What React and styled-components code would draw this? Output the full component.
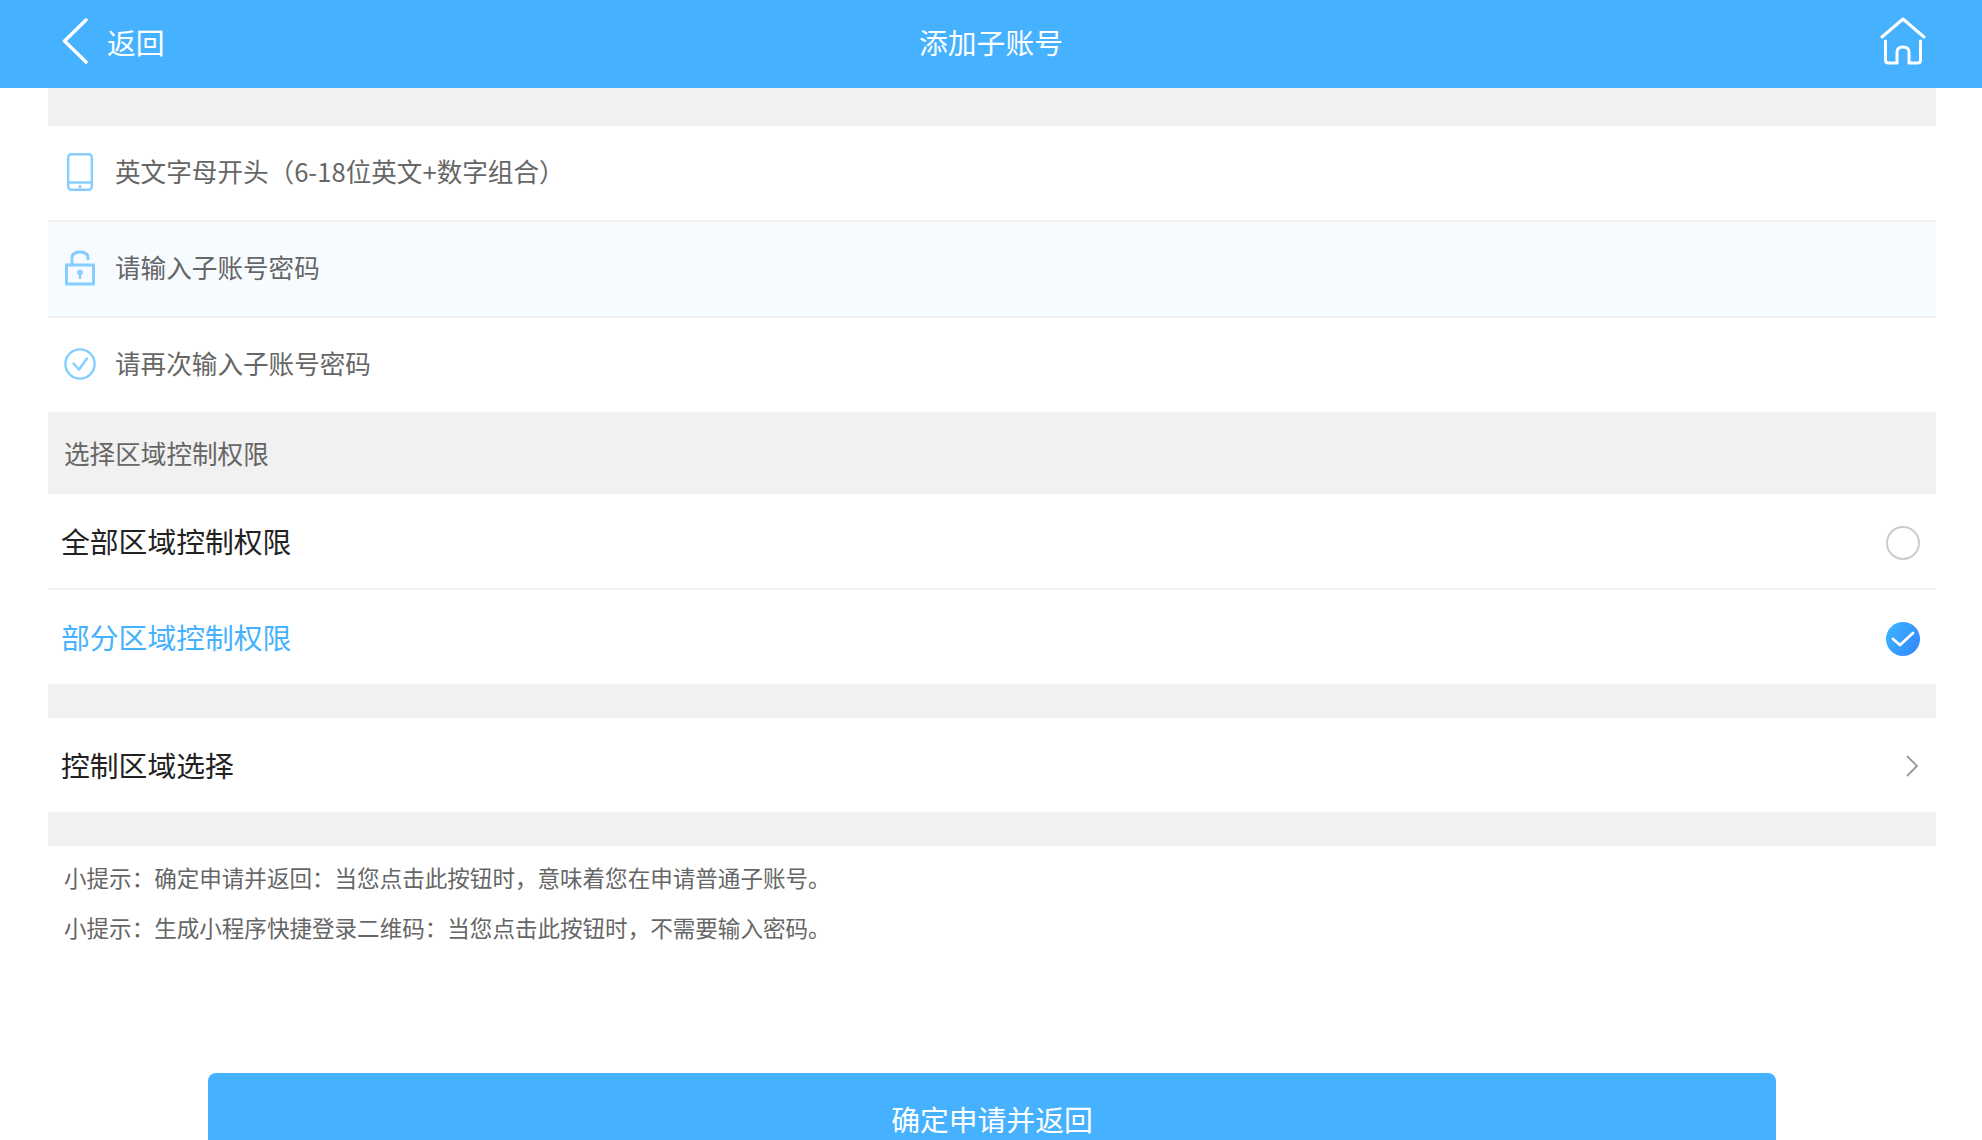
import React from 'react';
import styled, { createGlobalStyle } from 'styled-components';

const GlobalStyle = createGlobalStyle`
  html, body {
    margin: 0;
    padding: 0;
    height: 100%;
    overflow: hidden;
    background: #fff;
  }
  * {
    box-sizing: border-box;
  }
`;

const Page = styled.div`
  height: 1140px;
  overflow: hidden;
  background: #fff;
  font-family: "Noto Sans CJK SC", "Noto Sans", sans-serif;
`;

const Header = styled.header`
  height: 88px;
  background: #46b2ff;
  color: #fff;
  display: grid;
  grid-template-columns: 1fr auto 1fr;
  align-items: center;
  padding: 0 56px 6px 56px;
  font-size: 28.8px;
`;

const BackLink = styled.div`
  display: flex;
  align-items: center;
  gap: 19px;
  padding-left: 6px;
`;

const HeaderTitle = styled.div`
  text-align: center;
`;

const HomeLink = styled.div`
  display: flex;
  justify-content: flex-end;
`;

const Content = styled.main`
  margin-left: 48px;
  width: 1888px;
`;

const GrayBar = styled.div`
  height: ${props => props.$height}px;
  background: #f1f1f1;
`;

const SectionLabel = styled.div`
  height: 82px;
  background: #f1f1f1;
  color: #666;
  font-size: 25.6px;
  display: flex;
  align-items: center;
  padding: 0 0 2px 16px;
`;

const FieldRow = styled.div`
  height: ${props => (props.$divider ? 96 : 94)}px;
  display: flex;
  align-items: center;
  gap: 19px;
  padding-left: 16px;
  background: ${props => (props.$tinted ? '#f6fbff' : '#fff')};
  border-bottom: ${props => (props.$divider ? '2px solid #f2f2f2' : 'none')};
  color: #666;
  font-size: 25.6px;
`;

const FieldIcon = styled.div`
  width: 32px;
  display: flex;
  justify-content: center;
  margin-bottom: 3px;
`;

const FieldText = styled.span`
  margin-bottom: 5px;
`;

const OptionRow = styled.div`
  height: ${props => (props.$divider ? 96 : 94)}px;
  display: flex;
  align-items: center;
  justify-content: space-between;
  padding: 0 16px 0 13px;
  border-bottom: ${props => (props.$divider ? '2px solid #f2f2f2' : 'none')};
  color: ${props => (props.$active ? '#46b2ff' : '#222')};
  font-size: 28.8px;
`;

const OptionText = styled.span`
  margin-bottom: 2px;
`;

const Radio = styled.span`
  width: 34px;
  height: 34px;
  margin-top: 4px;
  border-radius: 50%;
  border: 2px solid #ccc;
`;

const RadioChecked = styled.span`
  width: 34px;
  height: 34px;
  margin-top: 4px;
  border-radius: 50%;
  background: linear-gradient(120deg, #3cb8ff, #3384ff);
  display: flex;
  align-items: center;
  justify-content: center;
`;

const Chevron = styled.span`
  display: flex;
  margin: 2px 1px 0 0;
`;

const Tips = styled.div`
  padding: 6px 0 0 16px;
  color: #666;
  font-size: 22.55px;
  line-height: 50px;
`;

const SubmitButton = styled.button`
  display: block;
  width: 1568px;
  height: 94px;
  margin: 121px 0 0 160px;
  padding: 0 0 3px;
  border: none;
  border-radius: 8px;
  background: #46b2ff;
  color: #fff;
  font-family: inherit;
  font-size: 28.8px;
`;

const BackIcon = () => (
  <svg width="26" height="46" viewBox="0 0 26 46" fill="none" stroke="#fff" strokeWidth="3.4" strokeLinecap="round" strokeLinejoin="round">
    <path d="M24 2 L2.5 23 L24 44" />
  </svg>
);

const HomeIcon = () => (
  <svg width="46" height="48" viewBox="0 0 46 48" fill="none" stroke="#fff" strokeWidth="3" strokeLinecap="round" strokeLinejoin="round">
    <path d="M2 20 L23 2 L44 20" />
    <path d="M5.5 24 V43 Q5.5 46 8.5 46 H17 V35 Q17 30 23 30 Q29 30 29 35 V46 H37.5 Q40.5 46 40.5 43 V24" />
  </svg>
);

const PhoneIcon = () => (
  <svg width="26" height="38" viewBox="0 0 26 38" fill="none" stroke="#85ceff" strokeWidth="2.4">
    <rect x="1.2" y="1.2" width="23.6" height="35.6" rx="3" />
    <path d="M1 29.5 H25" />
    <circle cx="13" cy="33.5" r="1.6" fill="#85ceff" stroke="none" />
  </svg>
);

const LockIcon = () => (
  <svg width="30" height="36" viewBox="0 0 30 36" fill="none" stroke="#85ceff" strokeWidth="3">
    <path d="M7 15 V8 Q7 2 15 2 Q23 2 23 8 V10" />
    <rect x="1.5" y="15" width="27" height="19" />
    <path d="M15 23 V29" strokeWidth="2.4" />
    <circle cx="15" cy="22.5" r="2.8" fill="#85ceff" stroke="none" />
  </svg>
);

const CheckCircleIcon = () => (
  <svg width="32" height="32" viewBox="0 0 32 32" fill="none" stroke="#85ceff" strokeWidth="2.4">
    <circle cx="16" cy="16" r="14.6" />
    <path d="M9.5 15.5 L15 21.5 L23 10.5" strokeLinecap="round" strokeLinejoin="round" />
  </svg>
);

const TickIcon = () => (
  <svg width="24" height="18" viewBox="0 0 24 18" fill="none" stroke="#fff" strokeWidth="2.8" strokeLinecap="round" strokeLinejoin="round">
    <path d="M2 9 L9 15 L22 3" />
  </svg>
);

const ChevronIcon = () => (
  <svg width="14" height="22" viewBox="0 0 14 22" fill="none" stroke="#999" strokeWidth="1.8">
    <path d="M2 1 L12 11 L2 21" />
  </svg>
);

const App = () => (
  <Page>
    <GlobalStyle />
    <Header>
      <BackLink>
        <BackIcon />
        <span>返回</span>
      </BackLink>
      <HeaderTitle>添加子账号</HeaderTitle>
      <HomeLink>
        <HomeIcon />
      </HomeLink>
    </Header>
    <Content>
      <GrayBar $height={38} />
      <FieldRow $divider>
        <FieldIcon><PhoneIcon /></FieldIcon>
        <FieldText>英文字母开头（6-18位英文+数字组合）</FieldText>
      </FieldRow>
      <FieldRow $divider $tinted>
        <FieldIcon><LockIcon /></FieldIcon>
        <FieldText>请输入子账号密码</FieldText>
      </FieldRow>
      <FieldRow>
        <FieldIcon><CheckCircleIcon /></FieldIcon>
        <FieldText>请再次输入子账号密码</FieldText>
      </FieldRow>
      <SectionLabel>选择区域控制权限</SectionLabel>
      <OptionRow $divider>
        <OptionText>全部区域控制权限</OptionText>
        <Radio />
      </OptionRow>
      <OptionRow $active>
        <OptionText>部分区域控制权限</OptionText>
        <RadioChecked><TickIcon /></RadioChecked>
      </OptionRow>
      <GrayBar $height={34} />
      <OptionRow>
        <OptionText>控制区域选择</OptionText>
        <Chevron><ChevronIcon /></Chevron>
      </OptionRow>
      <GrayBar $height={34} />
      <Tips>
        <div>小提示：确定申请并返回：当您点击此按钮时，意味着您在申请普通子账号。</div>
        <div>小提示：生成小程序快捷登录二维码：当您点击此按钮时，不需要输入密码。</div>
      </Tips>
      <SubmitButton>确定申请并返回</SubmitButton>
    </Content>
  </Page>
);

export default App;
